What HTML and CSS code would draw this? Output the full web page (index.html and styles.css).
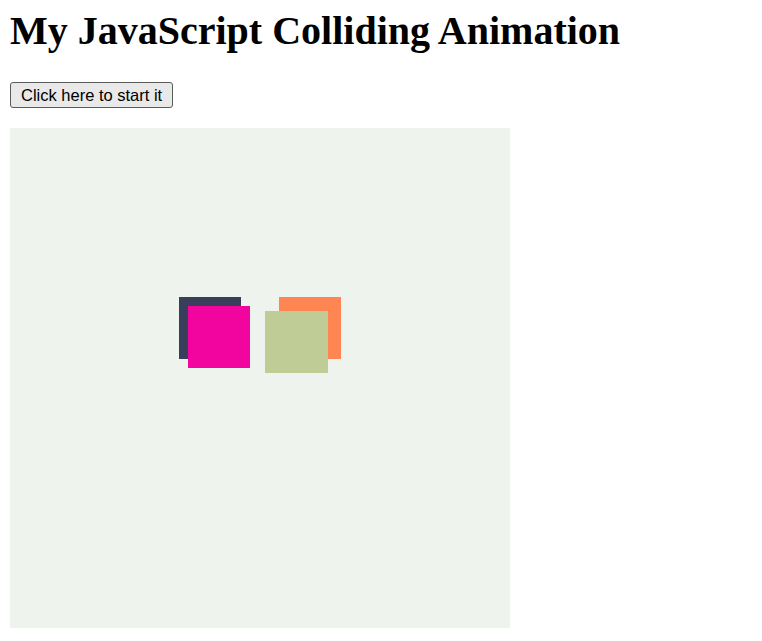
FILE: index.html
```html
<!DOCTYPE html>
<html>
<head>
<meta charset="utf-8">
<link rel="stylesheet" href="styles.css">
</head>
<body>
<h1 class="title">My JavaScript Colliding Animation</h1>
<p class="controls"><button class="start-btn">Click here to start it</button></p>
<div class="stage">
  <div class="box box-dark"></div>
  <div class="box box-pink"></div>
  <div class="box box-orange"></div>
  <div class="box box-green"></div>
</div>
</body>
</html>
```
FILE: styles.css
```css
html, body {
  margin: 0;
  padding: 0;
  background: #ffffff;
}
body {
  padding: 0 10px;
  font-family: "Liberation Serif", "Times New Roman", serif;
}
.title {
  font-size: 40px;
  font-weight: bold;
  margin: 0;
  padding-top: 8px;
  line-height: 46px;
}
.controls {
  margin: 0;
  padding-top: 28px;
  height: 26px;
  line-height: 0;
}
.start-btn {
  font-family: "Liberation Sans", Arial, sans-serif;
  font-size: 16.5px;
  line-height: 20px;
  height: 26px;
  padding: 1px 10px;
  background: #e9e9e9;
  border: 1px solid #5a5a5a;
  border-radius: 3px;
  color: #000;
  vertical-align: top;
}
.stage {
  position: relative;
  width: 500px;
  height: 500px;
  margin-top: 20px;
  background: #eff3ee;
}
.box {
  position: absolute;
  width: 62px;
  height: 62px;
}
.box-dark { left: 169px; top: 169px; background: #393e5a; }
.box-pink { left: 178px; top: 178px; background: #f2059f; }
.box-orange { left: 269px; top: 169px; background: #ff8552; }
.box-green { left: 255px; top: 183px; width: 63px; background: #c0cc95; }
```
